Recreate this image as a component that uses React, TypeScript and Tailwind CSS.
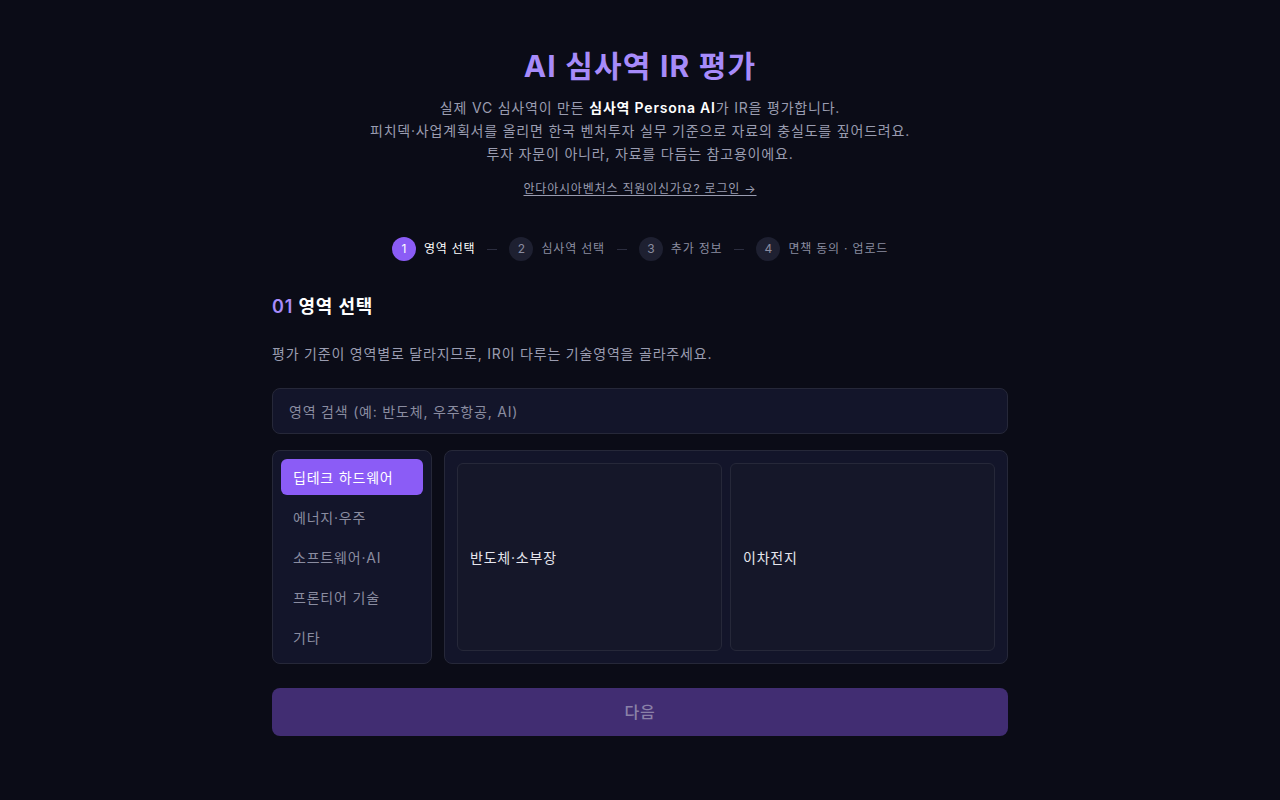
import { useState } from 'react';

const steps = ['영역 선택', '심사역 선택', '추가 정보', '면책 동의 · 업로드'];

const categories: Record<string, string[]> = {
  '딥테크 하드웨어': ['반도체·소부장', '이차전지'],
  '에너지·우주': ['신재생에너지', '우주항공'],
  '소프트웨어·AI': ['AI', 'SaaS'],
  '프론티어 기술': ['양자', '바이오'],
  '기타': ['기타'],
};

export default function App() {
  const [active, setActive] = useState('딥테크 하드웨어');
  const [query, setQuery] = useState('');

  return (
    <div
      className="min-h-screen w-full bg-[#0b0c17] tracking-[0.05em] text-white"
      style={{ fontFamily: '"Inter", "Noto Sans CJK KR", sans-serif' }}
    >
      <div className="mx-auto w-[736px] pt-[44px] pb-16">
        {/* Header */}
        <div className="flex flex-col items-center text-center">
          <h1 className="text-[30px] font-bold leading-[44px] tracking-[0.04em] text-[#a78bfa]">
            AI 심사역 IR 평가
          </h1>
          <p className="mt-[8px] text-[14px] leading-[23px] text-[#9a9cb0]">
            실제 VC 심사역이 만든 <b className="font-semibold text-white">심사역 Persona AI</b>가 IR을 평가합니다.
            <br />
            피치덱·사업계획서를 올리면 한국 벤처투자 실무 기준으로 자료의 충실도를 짚어드려요.
            <br />
            투자 자문이 아니라, 자료를 다듬는 참고용이에요.
          </p>
          <a href="#" className="mt-[15px] text-[12px] leading-[18px] text-[#9a9cb0] underline underline-offset-2">
            안다아시아벤처스 직원이신가요? 로그인 →
          </a>
        </div>

        {/* Stepper */}
        <div className="mt-[39px] flex items-center justify-center gap-3">
          {steps.map((s, i) => (
            <div key={s} className="flex items-center gap-3">
              <div className="flex items-center gap-2">
                <span
                  className={
                    i === 0
                      ? 'flex h-6 w-6 items-center justify-center rounded-full bg-[#8b5cf6] text-[12px] tracking-normal text-white'
                      : 'flex h-6 w-6 items-center justify-center rounded-full bg-[#1e2031] text-[12px] tracking-normal text-[#8a8ca0]'
                  }
                >
                  {i + 1}
                </span>
                <span className={i === 0 ? 'text-[12px] text-white' : 'text-[12px] text-[#8a8ca0]'}>{s}</span>
              </div>
              {i < steps.length - 1 && <span className="h-px w-[10px] bg-[#2c2e40]" />}
            </div>
          ))}
        </div>

        {/* Section */}
        <h2 className="mt-[32px] text-[18px] font-semibold leading-[28px] text-white">
          <span className="text-[#a78bfa]">01</span> 영역 선택
        </h2>
        <p className="mt-[23px] text-[14px] leading-[20px] text-[#9a9cb0]">
          평가 기준이 영역별로 달라지므로, IR이 다루는 기술영역을 골라주세요.
        </p>

        <input
          value={query}
          onChange={(e) => setQuery(e.target.value)}
          placeholder="영역 검색 (예: 반도체, 우주항공, AI)"
          className="mt-[24px] h-[46px] w-full rounded-lg border border-[#262839] bg-[#13152a] px-4 text-[14px] text-white outline-none placeholder:text-[#8a8ca0]"
        />

        <div className="mt-4 flex gap-3">
          <div className="flex w-[160px] shrink-0 flex-col gap-1 rounded-lg border border-[#262839] bg-[#13152a] p-2">
            {Object.keys(categories).map((c) => (
              <button
                key={c}
                onClick={() => setActive(c)}
                className={
                  c === active
                    ? 'h-9 rounded-md bg-[#8b5cf6] px-3 text-left text-[14px] text-white'
                    : 'h-9 rounded-md px-3 text-left text-[14px] text-[#8a8ca0]'
                }
              >
                {c}
              </button>
            ))}
          </div>
          <div className="grid flex-1 grid-cols-2 gap-2 rounded-lg border border-[#262839] bg-[#13152a] p-3">
            {categories[active].map((item) => (
              <button
                key={item}
                className="flex items-center rounded-md border border-[#262839] bg-[#151729] px-3 text-left text-[14px] font-normal text-[#e6e6ee]"
              >
                {item}
              </button>
            ))}
          </div>
        </div>

        <button
          disabled
          className="mt-6 h-12 w-full rounded-lg bg-[#412d72] text-[16px] font-medium text-[#8b81a8]"
        >
          다음
        </button>
      </div>
    </div>
  );
}
